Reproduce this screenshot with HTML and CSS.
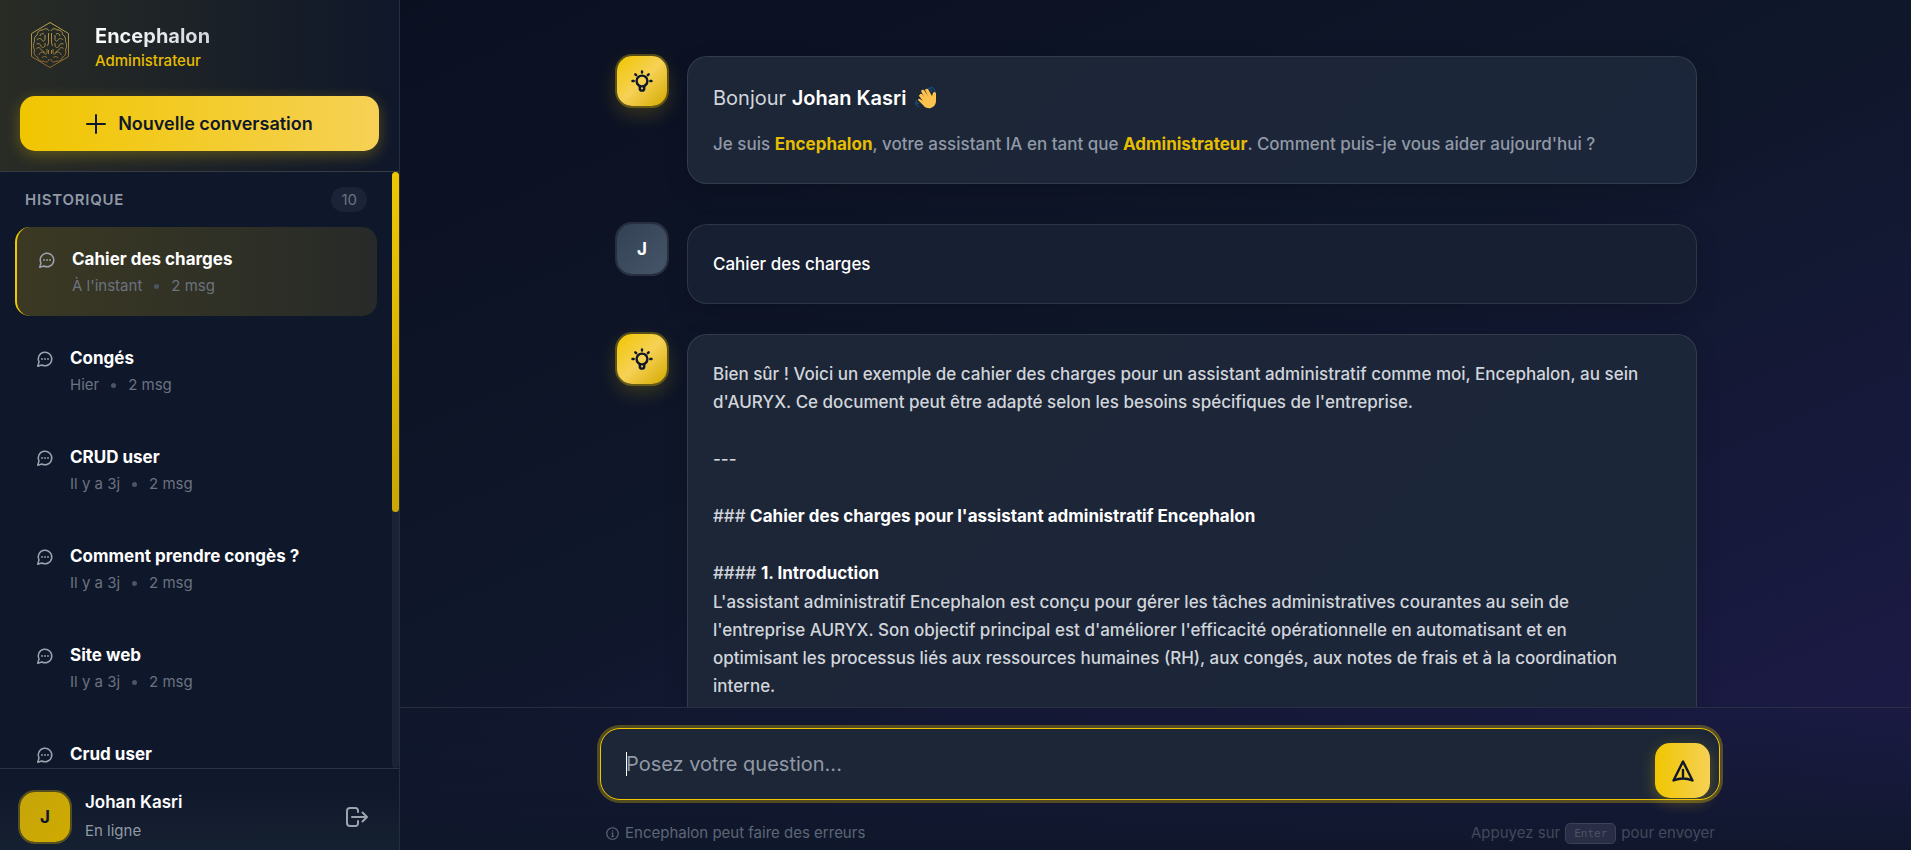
FILE: index.html
```html
<!DOCTYPE html>
<html lang="fr">
<head>
<meta charset="utf-8">
<title>Encephalon</title>
<link rel="stylesheet" href="styles.css">
</head>
<body>
<svg class="defs" aria-hidden="true">
  <defs>
    <linearGradient id="gold" gradientUnits="userSpaceOnUse" x1="0" y1="8" x2="0" y2="52"><stop offset="0" stop-color="#b9a653"/><stop offset="1" stop-color="#8c6229"/></linearGradient>
    <symbol id="bubble" viewBox="0 0 24 24"><path d="M7.9 20A9 9 0 1 0 4 16.100L2.300 21.700Z" fill="none" stroke="currentColor" stroke-width="2" stroke-linejoin="round"/><circle cx="8" cy="12" r="1.200" fill="currentColor"/><circle cx="12" cy="12" r="1.200" fill="currentColor"/><circle cx="16" cy="12" r="1.200" fill="currentColor"/></symbol>
    <symbol id="bulb" viewBox="0 0 22 22"><g fill="none" stroke="currentColor" stroke-width="2.400" stroke-linecap="round"><circle cx="11" cy="11" r="5.400"/><path d="M11 1.500v1M1.500 11h1.200M19.300 11h1.200M4.300 4.300l.9.9M17.700 4.300l-.9.9"/><path d="M8.800 16v2.400a2.200 2.200 0 0 0 4.400 0V16" stroke-linejoin="round"/></g></symbol>
    <symbol id="hemisphere" viewBox="0 0 60 60"><path fill="none" stroke="url(#gold)" stroke-width="1" d="M29 44c0 3-3 4-5 2-3 1-6-1-6.500-4-3-1-4-4-3-7-1.500-3-1.500-6 0-8.500-.5-3 .5-5.500 3-7 0-3 2.500-5 5.500-4.500 2-2 5-1.500 6 1M20 21c0-2 2-3 4-2M17 25c1-2 4-2 5 0s3 1 3-1v-4M16.500 29c2-1 4 0 4.500 2s3 2 4 0v-3M16.500 34c1-2 3-2 4 0s4 2 4 4M19 40c0-2 3-4 5-2s3 1 3-1v-3M22 43c1-2 4-2 5 0M28.500 18v10l-1 3M28.500 35v4"/></symbol>
  </defs>
</svg>
<div class="app">
  <aside class="sidebar">
    <header class="brand">
      <div class="brand-row">
        <svg class="logo" viewBox="0 0 60 60" fill="none" stroke="url(#gold)" aria-hidden="true">
          <path d="M30 7.500 48.500 18.500V41.500L30 52.500 11.500 41.500V18.500Z"/>
          <use href="#hemisphere" width="60" height="60"/>
          <use href="#hemisphere" width="60" height="60" transform="matrix(-1 0 0 1 60 0)"/>
        </svg>
        <div class="brand-text">
          <h1 class="brand-name">Encephalon</h1>
          <p class="brand-role">Administrateur</p>
        </div>
      </div>
      <button class="new-chat" type="button">
        <svg width="20" height="20" viewBox="0 0 20 20" stroke="currentColor" stroke-width="2" stroke-linecap="round" aria-hidden="true"><path d="M10 1v18M1 10h18"/></svg>
        Nouvelle conversation
      </button>
    </header>
    <section class="history">
      <div class="history-list">
        <div class="history-head"><h2 class="history-title">Historique</h2><span class="count">10</span></div>
        <button class="conv active" type="button"><svg class="conv-icon"><use href="#bubble"/></svg><span class="conv-text"><span class="conv-title">Cahier des charges</span><span class="conv-meta">À l'instant<i class="dot"></i>2 msg</span></span></button>
        <button class="conv" type="button"><svg class="conv-icon"><use href="#bubble"/></svg><span class="conv-text"><span class="conv-title">Congés</span><span class="conv-meta">Hier<i class="dot"></i>2 msg</span></span></button>
        <button class="conv" type="button"><svg class="conv-icon"><use href="#bubble"/></svg><span class="conv-text"><span class="conv-title">CRUD user</span><span class="conv-meta">Il y a 3j<i class="dot"></i>2 msg</span></span></button>
        <button class="conv" type="button"><svg class="conv-icon"><use href="#bubble"/></svg><span class="conv-text"><span class="conv-title">Comment prendre congès ?</span><span class="conv-meta">Il y a 3j<i class="dot"></i>2 msg</span></span></button>
        <button class="conv" type="button"><svg class="conv-icon"><use href="#bubble"/></svg><span class="conv-text"><span class="conv-title">Site web</span><span class="conv-meta">Il y a 3j<i class="dot"></i>2 msg</span></span></button>
        <button class="conv" type="button"><svg class="conv-icon"><use href="#bubble"/></svg><span class="conv-text"><span class="conv-title">Crud user</span></span></button>
      </div>
      <div class="track"><div class="thumb"></div></div>
    </section>
    <footer class="account">
      <div class="avatar avatar-me">J</div>
      <div class="account-text"><p class="account-name">Johan Kasri</p><p class="account-status">En ligne</p></div>
      <button class="logout" type="button" aria-label="Se déconnecter">
        <svg width="24" height="22" viewBox="0 0 24 22" fill="none" stroke="currentColor" stroke-width="2" stroke-linecap="round" stroke-linejoin="round" aria-hidden="true"><path d="M13 6V4.500A2.500 2.500 0 0 0 10.500 2H5A3 3 0 0 0 2 5v12a3 3 0 0 0 3 3h5.500a2.500 2.500 0 0 0 2.500-2.500V15M7 11h14.500M17.500 6.500 22 11l-4.500 4.500"/></svg>
      </button>
    </footer>
  </aside>
  <main class="main">
    <div class="chat">
      <div class="thread">
        <article class="message welcome">
          <div class="avatar avatar-bot"><svg width="22" height="22"><use href="#bulb"/></svg></div>
          <div class="card card-bot">
            <p class="greeting">Bonjour <strong>Johan Kasri</strong> <svg class="wave" viewBox="0 0 22 22" role="img" aria-label="main qui salue"><path d="M6 11 5 8q0-2 2-1l2 3-3-6q1-2 3-1l4 6-3-6q1-2 3-1l4 7 1-3q1-2 3 0v8q0 5-5 7-5 1-8-3l-5-5q0-2 2-1l3 2-4-5q0-2 2-1z" fill="#ffc14d"/><path d="M13 1q4 0 4 4M15 0q5 1 5 5M1 13q0 4 3 4M0 15q1 4 4 5" fill="none" stroke="#14578f" stroke-width="1"/></svg></p>
            <p class="intro">Je suis <strong>Encephalon</strong>, votre assistant IA en tant que <strong>Administrateur</strong>. Comment puis-je vous aider aujourd'hui ?</p>
          </div>
        </article>
        <article class="message">
          <div class="avatar avatar-user">J</div>
          <div class="card card-user"><p>Cahier des charges</p></div>
        </article>
        <article class="message">
          <div class="avatar avatar-bot"><svg width="22" height="22"><use href="#bulb"/></svg></div>
          <div class="card card-bot answer">
            <p>Bien sûr ! Voici un exemple de cahier des charges pour un assistant administratif comme moi, Encephalon, au sein d'AURYX. Ce document peut être adapté selon les besoins spécifiques de l'entreprise.</p>
            <p>---</p>
            <p>### <strong>Cahier des charges pour l'assistant administratif Encephalon</strong></p>
            <div class="answer-section">
              <p>#### <strong>1. Introduction</strong></p>
              <p>L'assistant administratif Encephalon est conçu pour gérer les tâches administratives courantes au sein de l'entreprise AURYX. Son objectif principal est d'améliorer l'efficacité opérationnelle en automatisant et en optimisant les processus liés aux ressources humaines (RH), aux congés, aux notes de frais et à la coordination interne.</p>
            </div>
          </div>
        </article>
      </div>
    </div>
    <form class="composer">
      <div class="composer-inner">
        <div class="field">
          <input class="prompt" type="text" placeholder="Posez votre question..." aria-label="Posez votre question" autofocus>
          <button class="send" type="button" aria-label="Envoyer"><svg width="22" height="22" viewBox="0 0 22 22" fill="none" stroke="currentColor" stroke-width="2.400" stroke-linecap="round" stroke-linejoin="round" aria-hidden="true"><path d="M11 1.500 1.500 20.500Q11 16.500 20.500 20.500ZM11 10v7"/></svg></button>
        </div>
        <div class="hints">
          <span class="hint"><svg width="13" height="13" viewBox="0 0 14 14" fill="none" stroke="currentColor" stroke-width="1.300" aria-hidden="true"><circle cx="7" cy="7" r="6.200"/><path d="M7 3.500v1.300M6 6.500h1.200V10M5.800 10.200h2.600"/></svg>Encephalon peut faire des erreurs</span>
          <span class="hint hint-key">Appuyez sur <kbd>Enter</kbd> pour envoyer</span>
        </div>
      </div>
    </form>
  </main>
</div>
</body>
</html>
```
FILE: styles.css
```css
* { box-sizing: border-box; }
body { margin: 0; font: 17px/28px Inter, "Liberation Sans", sans-serif; color: #fff; background: #0f172a; }
h1, h2, p { margin: 0; }
button { font: inherit; border: 0; cursor: pointer; }
.defs { position: absolute; width: 0; height: 0; }
.app { display: flex; height: 100vh; overflow: hidden; background: linear-gradient(to bottom right, #0a0e1f 0%, #0f172a 50%, #1e1b4b 100%); }

.sidebar { flex: 0 0 400px; display: flex; flex-direction: column; background: #0f172a; border-right: 1px solid #252d40; }
.brand { padding: 15px 20px 20px; border-bottom: 1px solid #383c42; background: linear-gradient(90deg, #292c25, #0f172a); }
.brand-row { display: flex; align-items: center; gap: 15px; margin-bottom: 21px; }
.logo { width: 60px; height: 60px; }
.brand-text { padding-top: 5px; }
.brand-name { font-size: 20px; font-weight: 700; line-height: 26px; color: transparent; background: linear-gradient(90deg, #fff, #d1d5db); background-clip: text; }
.brand-role { font-size: 15px; font-weight: 500; line-height: 24px; color: #e6be00; }
.new-chat { display: flex; align-items: center; justify-content: center; gap: 12px; width: 100%; height: 55px; border-radius: 15px; font-size: 18px; font-weight: 600; color: #0f172a; background: linear-gradient(90deg, #f0c600, #f6d155); box-shadow: 0 4px 15px rgba(240, 198, 0, .3); }

.history { flex: 1; min-height: 0; display: flex; }
.history-list { flex: 1; min-width: 0; overflow: hidden; padding: 15px 15px 0; }
.history-head { display: flex; align-items: center; justify-content: space-between; padding: 0 10px; margin-bottom: 15px; }
.history-title { font-size: 15px; font-weight: 600; line-height: 25px; letter-spacing: 0.05em; text-transform: uppercase; color: #9199a6; }
.count { padding: 0 10px; border-radius: 13px; font-size: 15px; line-height: 25px; color: #6b7280; background: #1b2436; }
.conv { display: flex; align-items: flex-start; gap: 16px; width: 100%; height: 89px; margin-bottom: 10px; padding: 18px 21px; border-radius: 15px; text-align: left; color: #fff; background: none; }
.conv.active { border-left: 2px solid #f0c600; background: linear-gradient(90deg, #3b3923, #272a28); }
.conv-icon { flex: none; width: 18px; height: 18px; margin-top: 6px; color: #9ca3af; }
.conv-text, .conv-title { display: block; }
.conv-title { font-weight: 700; line-height: 28px; }
.conv-meta { display: flex; align-items: center; font-size: 15px; line-height: 26px; color: #6b7280; }
.dot { width: 5px; height: 5px; margin: 0 12px; border-radius: 50%; background: #4b5563; }
.track { width: 7px; border-radius: 4px; background: #1b2436; }
.thumb { height: 57%; border-radius: 4px; background: linear-gradient(#f0c600, #c9a602); }

.account { display: flex; align-items: center; gap: 15px; padding: 19px 20px 5px; border-top: 1px solid #2b3445; background: linear-gradient(#0f172a, #152031); }
.avatar { flex: none; display: grid; place-items: center; width: 50px; height: 50px; border-radius: 15px; font-weight: 700; }
.avatar-me { color: #0f172a; background: linear-gradient(135deg, #c5a50a, #d0aa00); box-shadow: 0 0 0 2px rgba(240, 198, 0, .3); }
.account-text { flex: 1; }
.account-name { font-weight: 600; line-height: 28px; }
.account-status { font-size: 15px; line-height: 29px; color: #9199a6; }
.logout { display: grid; place-items: center; padding: 10px; color: #9ca3af; background: none; }

.main { flex: 1; min-width: 0; display: flex; flex-direction: column; }
.chat { flex: 1; min-height: 0; overflow: hidden; padding: 56px 20px 0 23px; }
.thread { display: flex; flex-direction: column; gap: 30px; max-width: 1080px; margin: 0 auto; }
.message { display: flex; align-items: flex-start; gap: 20px; font-weight: 500; }
.welcome { margin-bottom: 10px; }
.avatar-bot { color: #0f172a; background: linear-gradient(135deg, #f0c600, #f6d155 50%, #d4aa00); box-shadow: 0 0 0 2px rgba(240, 198, 0, .3), 0 8px 20px rgba(240, 198, 0, .2); }
.avatar-user { background: linear-gradient(135deg, #334155, #475569); box-shadow: 0 0 0 2px rgba(107, 114, 128, .3); }
.card { flex: 1; min-width: 0; padding: 25px; border: 1px solid rgba(255, 255, 255, .1); border-radius: 20px; box-shadow: 0 8px 25px rgba(0, 0, 0, .15); }
.card-bot { color: #d1d5db; background: linear-gradient(135deg, #1c2636, #1c263a); }
.card-user { background: #171f32; }
.card strong { font-weight: 700; color: #fff; }
.greeting { margin-bottom: 16px; font-size: 20px; font-weight: 400; line-height: 32px; }
.card .greeting strong { font-weight: 600; }
.intro { color: #9199a6; }
.card .intro strong { color: #e6be00; }
.answer { display: flex; flex-direction: column; gap: 29px; padding-right: 50px; }
.answer-section { display: flex; flex-direction: column; gap: 1px; }
.wave { width: 22px; height: 22px; vertical-align: -4px; margin-left: 3px; }

.composer { padding: 20px 20px 5px 29px; border-top: 1px solid rgba(255, 255, 255, .1); background: linear-gradient(rgba(15, 23, 42, .1), rgba(15, 23, 42, .9)); }
.composer-inner { max-width: 1120px; margin: 0 auto; }
.field { display: flex; align-items: flex-end; height: 72px; padding: 0 9px 1px 25px; border: 1px solid #f0c600; border-radius: 20px; background: #1c2636; box-shadow: 0 0 0 3px rgba(240, 198, 0, .3); }
.prompt { flex: 1; min-width: 0; height: 69px; padding: 0; border: 0; outline: 0; font: 20px/30px Inter, sans-serif; color: #fff; background: none; }
.prompt::placeholder { color: #9199a6; opacity: 1; }
.prompt:placeholder-shown { caret-color: transparent; background: linear-gradient(#fff, #fff) left center / 1px 24px no-repeat; }
.send { display: grid; place-items: center; width: 55px; height: 55px; padding: 0; border-radius: 15px; color: #0f172a; background: linear-gradient(90deg, #f0c600, #f6d155); box-shadow: 0 4px 15px rgba(240, 198, 0, .3); }
.hints { display: flex; align-items: center; justify-content: space-between; margin-top: 21px; padding: 0 5px 0 6px; font-size: 15px; line-height: 24px; color: #5d6675; }
.hint { display: flex; align-items: center; gap: 6px; }
.hint-key { color: #414a5b; gap: 5px; }
kbd { height: 21px; padding: 0 8px; border: 1px solid #3b4156; border-radius: 5px; font: 11px/20px "DejaVu Sans Mono", monospace; color: #4b5563; background: #292d45; }
```
